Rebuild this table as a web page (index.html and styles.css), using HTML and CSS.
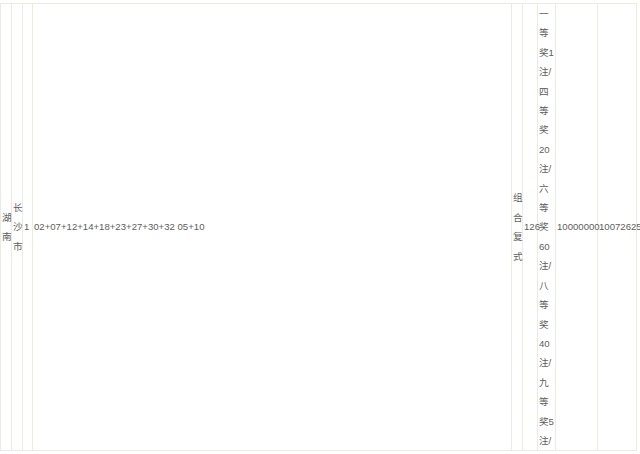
FILE: index.html
```html
<!DOCTYPE html>
<html lang="zh">
<head>
    <meta charset="UTF-8">
    <title>开奖详情</title>
    <link rel="stylesheet" href="styles.css">
</head>
<body>
    <!-- Таблица результатов -->
    <table class="result">
        <colgroup>
            <col class="c-prov">
            <col class="c-city">
            <col class="c-num">
            <col class="c-balls">
            <col class="c-type">
            <col class="c-count">
            <col class="c-prize">
            <col class="c-money">
            <col class="c-sales">
        </colgroup>
        <tr>
            <td>湖南</td>
            <td>长沙市</td>
            <td>1</td>
            <td class="nowrap">02+07+12+14+18+23+27+30+32 05+10</td>
            <td>组合复式</td>
            <td class="nowrap">126</td>
            <td class="prize">一等奖1注/四等奖20注/六等奖60注/八等奖40注/九等奖5注/</td>
            <td class="nowrap">10000000</td>
            <td class="nowrap">10072625</td>
        </tr>
    </table>
</body>
</html>
```

FILE: styles.css
```css
/* Страница */
body {
    margin: 0;
    background: #fff;
    overflow: hidden;
    font-family: "Liberation Sans", Arial, "Noto Sans CJK SC", sans-serif;
}

/* Таблица */
.result {
    width: 637px;
    margin-top: 3px;
    border-collapse: collapse;
    table-layout: fixed;
    font-size: 9.6px;
    line-height: 19.4px;
    color: #5e5e5e;
}

.result td {
    border: 1px solid #ecebe0;
    padding: 0 1px;
    vertical-align: middle;
    text-align: left;
    overflow: visible;
}

.nowrap {
    white-space: nowrap;
}

.result td.prize {
    padding-right: 0;
}

/* Ширины колонок */
.c-prov { width: 11px; }
.c-city { width: 11px; }
.c-num { width: 10px; }
.c-type { width: 11px; }
.c-count { width: 15px; }
.c-prize { width: 18px; }
.c-money { width: 42px; }
.c-sales { width: 39px; }
```
